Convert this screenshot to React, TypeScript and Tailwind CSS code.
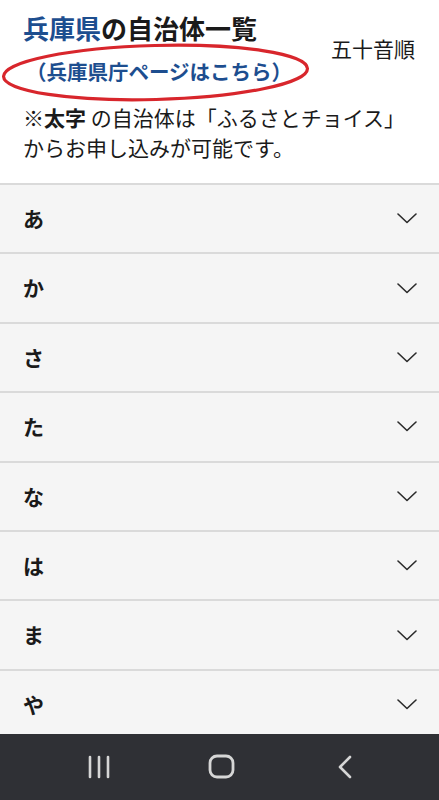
import React from "react";

const rows = ["あ", "か", "さ", "た", "な", "は", "ま", "や"];

const Chevron = () => (
  <svg width="20" height="11" viewBox="0 0 20 11" fill="none">
    <polyline points="1,1 10,9.5 19,1" stroke="#2b2b2b" strokeWidth="1.6" strokeLinecap="round" strokeLinejoin="round" />
  </svg>
);

const App = () => {
  return (
    <div className="h-[800px] w-[439px] flex flex-col bg-white overflow-hidden" style={{ fontFamily: '"Noto Sans CJK JP", "Noto Sans", sans-serif' }}>
      <div className="flex-1 overflow-hidden">
        {/* Header */}
        <div className="relative px-[23px] pt-[11px] pb-[21px] text-[#1a1a1a]">
          <div className="flex justify-between">
            <div>
              <h1 className="text-[26px] leading-[34px] font-bold">
                <span className="text-[#1d4e8f]">兵庫県</span>の自治体一覧
              </h1>
              <a className="block mt-[12px] pl-[3px] text-[20.5px] leading-[28px] font-bold text-[#1d4e8f]">（兵庫県庁ページはこちら）</a>
            </div>
            <div className="mt-[22px] text-[21px] leading-[30px] mr-[1px]">五十音順</div>
          </div>
          <p className="mt-[17px] text-[21px] leading-[30px]">
            ※<span className="font-bold">太字</span> の自治体は「ふるさとチョイス」
            <br />
            からお申し込みが可能です。
          </p>
          {/* red annotation ring */}
          <svg className="absolute left-0 top-0 pointer-events-none" width="320" height="110" viewBox="0 0 320 110">
            <ellipse cx="155.5" cy="72.5" rx="152" ry="27" fill="none" stroke="#d8262c" strokeWidth="3.2" transform="rotate(-1.5 155.5 72.5)" />
          </svg>
        </div>

        {/* Rows */}
        <div className="bg-[#f5f5f5]">
          {rows.map((r) => (
            <div key={r} className="h-[69.4px] border-t-2 border-[#dadada] flex items-center justify-between pl-[23px] pr-[22px]">
              <span className="text-[21px] font-bold text-[#1a1a1a]">{r}</span>
              <Chevron />
            </div>
          ))}
        </div>
      </div>

      {/* Android nav bar */}
      <div className="h-[66px] bg-[#2f3035] grid grid-cols-[123px_123px_123px] justify-center items-center pl-[4px]">
        <div className="flex justify-center">
          <svg width="24" height="24" viewBox="0 0 24 24">
            <g stroke="#d6d6d6" strokeWidth="2.6" strokeLinecap="round">
              <line x1="3" y1="2" x2="3" y2="22" />
              <line x1="12" y1="2" x2="12" y2="22" />
              <line x1="21" y1="2" x2="21" y2="22" />
            </g>
          </svg>
        </div>
        <div className="flex justify-center">
          <svg width="28" height="26" viewBox="0 0 28 26">
            <rect x="2" y="2" width="23" height="21" rx="7" fill="none" stroke="#d6d6d6" strokeWidth="2.8" />
          </svg>
        </div>
        <div className="flex justify-center">
          <svg width="16" height="24" viewBox="0 0 16 24">
            <polyline points="13,2 3,12 13,22" fill="none" stroke="#d6d6d6" strokeWidth="2.6" strokeLinecap="round" strokeLinejoin="round" />
          </svg>
        </div>
      </div>
    </div>
  );
};

export default App;
